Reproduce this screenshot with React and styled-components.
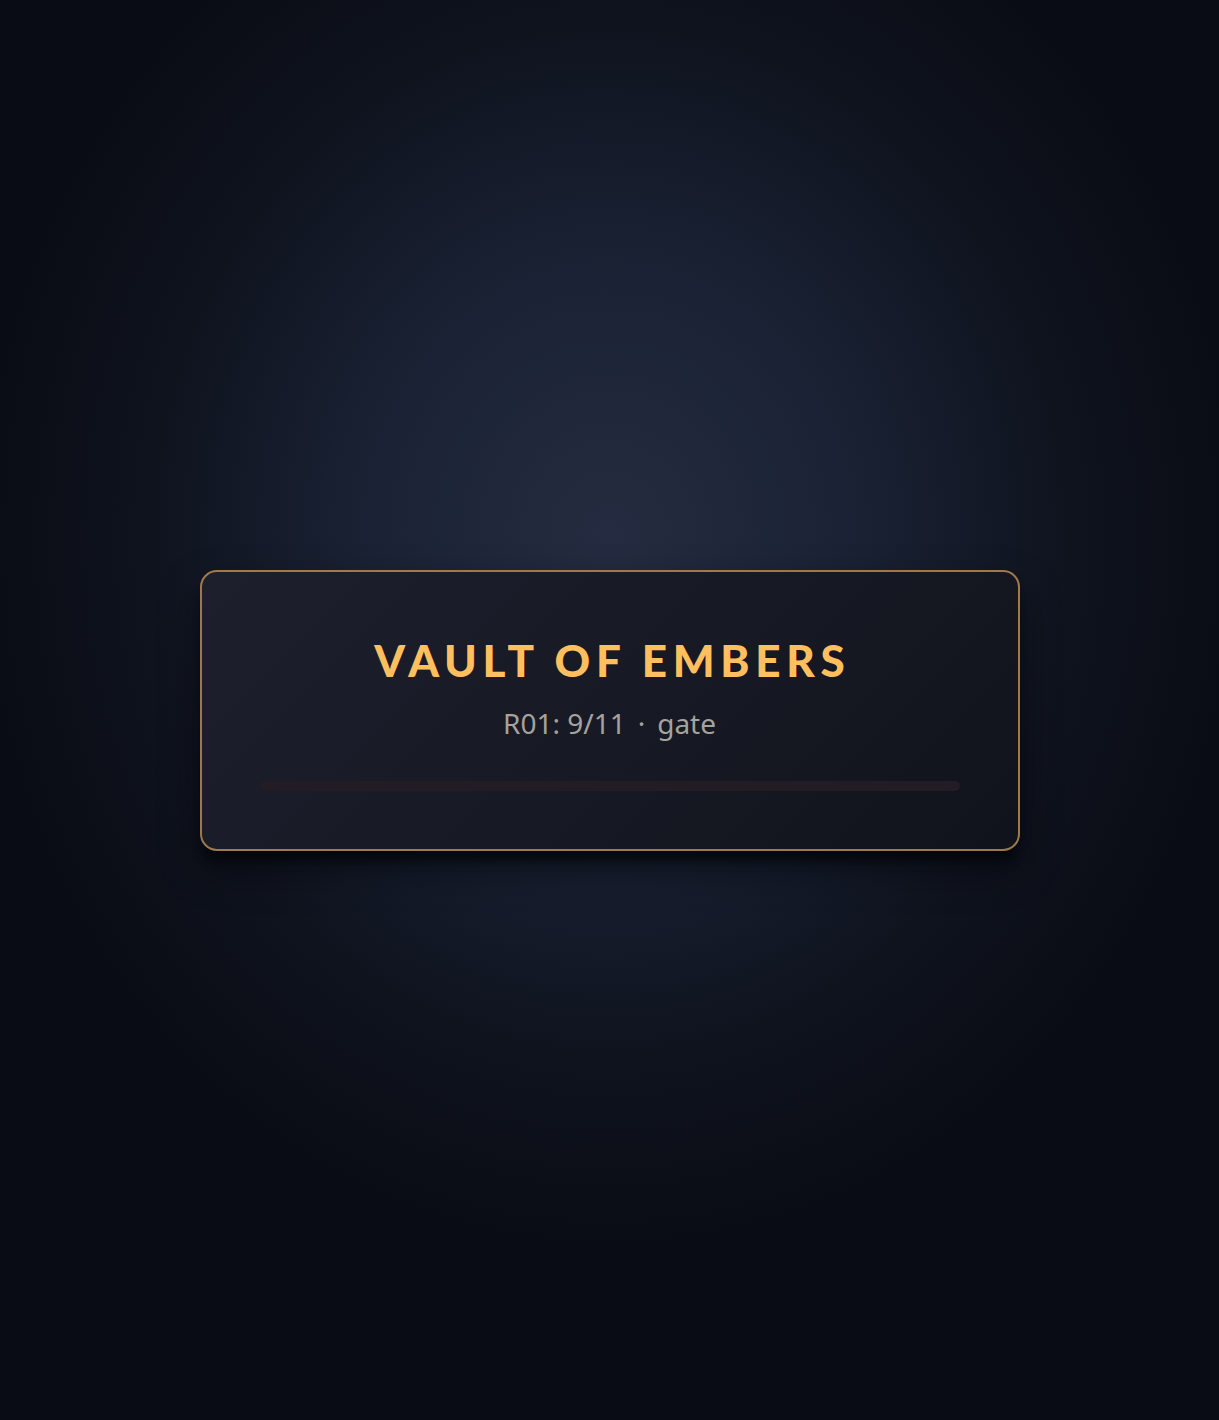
import React from "react";
import styled, { createGlobalStyle } from "styled-components";

const Global = createGlobalStyle`
  html, body { margin: 0; padding: 0; }
  body {
    background: #090c14;
    font-family: "Noto Sans", "Open Sans", sans-serif;
  }
`;

const Stage = styled.main`
  min-height: 1420px;
  display: flex;
  align-items: center;
  justify-content: center;
  background: radial-gradient(ellipse 640px 720px at 50% 38%, #252c41 0%, #192133 40%, #0f131e 72%, #090c14 100%);
  box-sizing: border-box;
`;

const Card = styled.section`
  width: 820px;
  box-sizing: border-box;
  padding: 60px 58px 58px;
  border: 2px solid rgba(196, 150, 84, 0.78);
  border-radius: 17px;
  background: linear-gradient(135deg, #1d202c 0%, #171a25 50%, #11131b 100%);
  box-shadow: 0 14px 10px -4px rgba(4, 6, 10, 0.75), 0 18px 40px rgba(3, 5, 9, 0.45);
  display: flex;
  flex-direction: column;
  align-items: center;
`;

const Title = styled.h1`
  margin: 0;
  font-family: "Lato", "Noto Sans", sans-serif;
  font-weight: 900;
  font-size: 44px;
  line-height: 56px;
  letter-spacing: 0.13em;
  margin-right: -0.13em;
  color: #ffbf5e;
`;

const Meta = styled.p`
  margin: 16px 0 0;
  font-size: 28px;
  line-height: 38px;
  color: #a6a29c;
  display: flex;
  gap: 12px;
`;

const Track = styled.div`
  margin-top: 39px;
  width: 100%;
  height: 10px;
  border-radius: 5px;
  background: #241c24;
  overflow: hidden;
`;

const Fill = styled.div`
  height: 100%;
  background: #2a1e24;
`;

export default function App() {
  const progress = 0;
  return (
    <>
      <Global />
      <Stage>
        <Card>
          <Title>VAULT OF EMBERS</Title>
          <Meta>
            <span>R01: 9/11</span>
            <span>·</span>
            <span>gate</span>
          </Meta>
          <Track>
            <Fill style={{ width: `${progress}%` }} />
          </Track>
        </Card>
      </Stage>
    </>
  );
}
